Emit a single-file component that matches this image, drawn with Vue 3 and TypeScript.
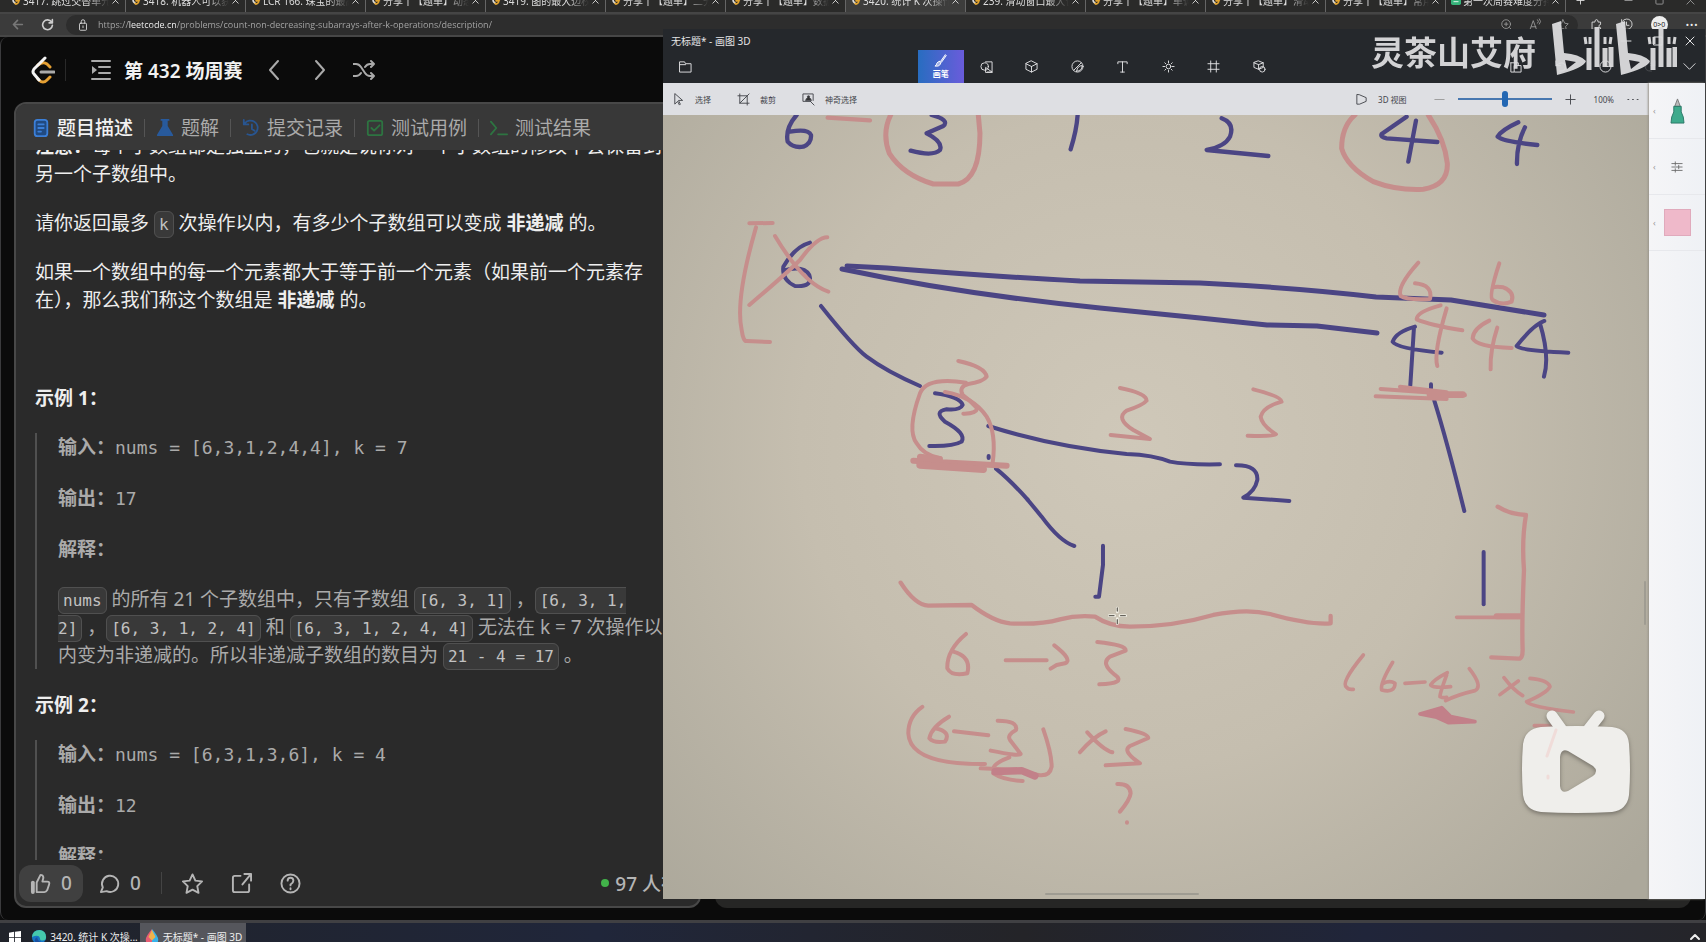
<script setup lang="ts">
import { ref } from 'vue'

interface BrowserTab {
  title: string
  active?: boolean
  sheet?: boolean
}

const browserTabs: BrowserTab[] = [
  { title: '3417. 跳过交替单元格' },
  { title: '3418. 机器人可以获得' },
  { title: 'LCR 166. 珠宝的最高' },
  { title: '分享丨【题单】动态规' },
  { title: '3419. 图的最大边权的' },
  { title: '分享丨【题单】二分算' },
  { title: '分享丨【题单】数据结' },
  { title: '3420. 统计 K 次操作以', active: true },
  { title: '239. 滑动窗口最大值' },
  { title: '分享丨【题单】单调栈' },
  { title: '分享丨【题单】滑动窗' },
  { title: '分享丨【题单】常用数' },
  { title: '第一次周赛难度分排', sheet: true },
]

const problemTabs = [
  { id: 'doc', label: '题目描述' },
  { id: 'flask', label: '题解' },
  { id: 'history', label: '提交记录' },
  { id: 'check', label: '测试用例' },
  { id: 'term', label: '测试结果' },
]
const activeTab = ref('doc')
const url = ref('https://leetcode.cn/problems/count-non-decreasing-subarrays-after-k-operations/description/')
const zoom = ref(50)
</script>

<template>
  <div class="desktop">
    <header class="browser">
      <div class="tabstrip">
        <div v-for="tab in browserTabs" :key="tab.title" class="btab" :class="{ on: tab.active }">
          <svg v-if="tab.sheet" class="fav" viewBox="0 0 12 12"><rect width="12" height="12" rx="2" fill="#36b37a" /><path d="M3 5h6M3 8h6" stroke="#fff" /></svg>
          <svg v-else class="fav" viewBox="0 0 12 12" fill="none" stroke-width="2" stroke-linecap="round"><path d="M7 1 3 5q-1 1 0 3l2 2" stroke="#ddd" /><path d="m5 10 1 1q1 0 3-2M6 7h4" stroke="#e4a52e" /></svg>
          <span class="btitle">{{ tab.title }}</span>
          <button class="bclose" aria-label="关闭标签页"><svg viewBox="0 0 10 10"><path d="m2 2 6 6M8 2 2 8" /></svg></button>
        </div>
        <button class="newtab" aria-label="新建标签页"><svg viewBox="0 0 10 10"><path d="M5 1v8M1 5h8" /></svg></button>
        <div class="wincontrols">
          <button aria-label="最小化"><svg viewBox="0 0 10 10"><path d="M1 5h8" /></svg></button>
          <button aria-label="最大化"><svg viewBox="0 0 10 10"><rect x="1" y="1" width="8" height="8" rx="1" /></svg></button>
          <button aria-label="关闭"><svg viewBox="0 0 10 10"><path d="m1 1 8 8M9 1 1 9" /></svg></button>
        </div>
      </div>
      <div class="addressrow">
        <button class="nav back" aria-label="后退"><svg viewBox="0 0 16 16"><path d="M14 8H3m5-5L3 8l5 5" /></svg></button>
        <button class="nav" aria-label="刷新"><svg viewBox="0 0 16 16"><path d="M13 5a6 6 0 1 0 1 4M14 2v4h-4" /></svg></button>
        <div class="addressbar">
          <svg viewBox="0 0 16 16"><rect x="4" y="6" width="8" height="8" rx="1" /><path d="M6 6V4q0-2 2-2t2 2v2M8 9v2" /></svg>
          <input v-model="url" type="text" aria-label="地址栏" />
          <svg viewBox="0 0 16 16" class="dim"><circle cx="7" cy="7" r="5" /><path d="m11 11 4 4M5 7h4M7 5v4" /></svg>
          <svg viewBox="0 0 16 16" class="dim"><path d="m2 14 4-11 4 11M4 10h5M11 2q2 2 0 4M13 1q3 3 0 6" /></svg>
          <svg viewBox="0 0 16 16" class="dim"><path d="m8 2 2 4 4 .6-3 3 .7 4.400L8 12l-3.700 2L5 9.600l-3-3L6 6z" /></svg>
        </div>
        <div class="browsertools">
          <button aria-label="扩展"><svg viewBox="0 0 16 16"><path d="M3 5h3q0-3 2-3t2 3h3v3q-2 0-2 2t2 2v2H3z" /></svg></button>
          <button aria-label="历史记录"><svg viewBox="0 0 16 16"><path d="M3 4a6.500 6.500 0 1 1-1 5M2 2v4h4M8 5v4h3" /></svg></button>
          <button class="avatar" aria-label="个人资料">0&gt;0</button>
          <button aria-label="更多">···</button>
        </div>
      </div>
    </header>

    <main class="page">
      <nav class="lcbar">
        <a href="#" class="logo" aria-label="力扣">
          <svg viewBox="0 0 24 28" fill="none" stroke-width="3" stroke-linecap="round" stroke-linejoin="round">
            <path d="M7 9q5-4 9-1l3 3M19 21l-3 3q-4 4-8 0l-1-1" stroke="#e5a033" /><path d="M14 2 3 13q-2 3 0 5l5 6" stroke="#f4f4f4" /><path d="M10 16h13" stroke="#aaa" />
          </svg>
        </a>
        <span class="rule"></span>
        <button class="list" aria-label="题目列表"><svg viewBox="0 0 22 22"><path d="M2 2h18M9 8h11M9 14h11M2 20h18" /><path d="M2 7v8l5-4z" fill="currentColor" stroke="none" /></svg></button>
        <a href="#" class="contest">第 432 场周赛</a>
        <button class="prev" aria-label="上一题"><svg viewBox="0 0 22 22"><path d="m15 2-8 9 8 9" /></svg></button>
        <button class="next" aria-label="下一题"><svg viewBox="0 0 22 22"><path d="m7 2 8 9-8 9" /></svg></button>
        <button aria-label="随机一题"><svg viewBox="0 0 22 22"><path d="M0 5h3q3 0 5 3l4 6q2 3 5 3h4M0 17h3q3 0 5-3M12 8q2-3 5-3h4M18 2l3 3-3 3M18 14l3 3-3 3" /></svg></button>
      </nav>

      <section class="panel">
        <div class="ptabs" role="tablist">
          <button v-for="t in problemTabs" :key="t.id" role="tab" class="ptab" :class="{ on: activeTab === t.id }" :aria-selected="activeTab === t.id" @click="activeTab = t.id">
            <svg v-if="t.id === 'doc'" class="raw" viewBox="0 0 20 20" stroke="#3b7fd8"><rect x="3" y="1" width="14" height="18" rx="3" fill="#214a80" /><path d="M7 6h6M7 10h6M7 14h3" /></svg>
            <svg v-else-if="t.id === 'flask'" class="raw" viewBox="0 0 20 20" fill="#285a9c" stroke="#285a9c"><path d="M6 1h8M8 2v6L2 18h16L12 8V2z" /></svg>
            <svg v-else-if="t.id === 'history'" class="raw" viewBox="0 0 20 20" fill="none" stroke="#285590"><path d="M3 5a8 8 0 1 1 3 12M2 1v5h5M11 6v5l3 2" /></svg>
            <svg v-else-if="t.id === 'check'" class="raw" viewBox="0 0 20 20" fill="none" stroke="#2d7441"><rect x="2" y="2" width="16" height="16" rx="2" /><path d="m6 10 3 3 6-6" /></svg>
            <svg v-else class="raw" viewBox="0 0 20 20" fill="none" stroke="#2d7441"><path d="m1 3 6 7-6 7M9 17h10" /></svg>
            <span>{{ t.label }}</span>
          </button>
        </div>

        <article class="content">
          <p class="first"><b>注意：</b>每个子数组都是独立的，也就是说你对一个子数组的修改不会保留到<br />另一个子数组中。</p>
          <p>请你返回最多 <code>k</code> 次操作以内，有多少个子数组可以变成 <b>非递减</b> 的。</p>
          <p>如果一个数组中的每一个元素都大于等于前一个元素（如果前一个元素存<br />在），那么我们称这个数组是 <b>非递减</b> 的。</p>
          <p>&nbsp;</p>
          <p><b>示例 1：</b></p>
          <blockquote>
            <p><b>输入：</b><samp>nums = [6,3,1,2,4,4], k = 7</samp></p>
            <p><b>输出：</b><samp>17</samp></p>
            <p><b>解释：</b></p>
            <p><code>nums</code> 的所有 21 个子数组中，只有子数组 <code>[6, 3, 1]</code> ，<code>[6, 3, 1, <br />2]</code> ，<code>[6, 3, 1, 2, 4]</code> 和 <code>[6, 3, 1, 2, 4, 4]</code> 无法在 k = 7 次操作以<br />内变为非递减的。所以非递减子数组的数目为 <code>21 - 4 = 17</code> 。</p>
          </blockquote>
          <p><b>示例 2：</b></p>
          <blockquote>
            <p><b>输入：</b><samp>nums = [6,3,1,3,6], k = 4</samp></p>
            <p><b>输出：</b><samp>12</samp></p>
            <p><b>解释：</b></p>
          </blockquote>
        </article>

        <footer class="pfoot">
          <button class="like"><svg viewBox="0 0 22 22"><path d="M7 20V10l4-8q3 0 3 3l-1 4h5q3 0 2 3l-2 6q-1 2-3 2z" /><path d="M3 10v10" stroke-width="4" /></svg>0</button>
          <button class="comment"><svg viewBox="0 0 22 22"><path d="M2 20l2-5a8.500 8.500 0 1 1 4 4z" /></svg>0</button>
          <span class="rule"></span>
          <button aria-label="收藏"><svg viewBox="0 0 22 22"><path d="m11 1.500 3 6.500 7 .8-5 5 1.300 7L11 17.400 4.700 20.800 6 13.800l-5-5L8 8z" /></svg></button>
          <button aria-label="分享"><svg viewBox="0 0 22 22"><path d="M10 3H4q-2 0-2 2v13q0 2 2 2h13q2 0 2-2v-6M14 1h7v7M21 1l-9 11" /></svg></button>
          <button aria-label="帮助"><svg viewBox="0 0 22 22"><circle cx="11" cy="11" r="9.500" /><path d="M8 8q0-3 3-3t3 3q0 2-3 4v1M11 16v1" /></svg></button>
          <span class="online"><i></i>97 人在线</span>
        </footer>
      </section>
      <div class="sidepanel"></div>
    </main>

    <footer class="taskbar">
      <button class="start" aria-label="开始"><svg class="raw" viewBox="0 0 14 14" fill="#fff"><path d="M0 2 6 1v6H0zM7 1l7-1v7H7zM0 8h6v6l-6-1zM7 8h7v7l-7-1z" /></svg></button>
      <button class="task">
        <svg class="raw" viewBox="0 0 18 18"><circle cx="9" cy="9" r="8" fill="#1674c4" /><path d="M1 9q1-8 9-8 7 1 7 8 0 4-4 4-3 0-3-3-1-4-9-1z" fill="#45c8ac" /><path d="M7 9q0 6 8 6-5 4-9 1-4-4 1-7z" fill="#1a4f9f" /></svg>
        3420. 统计 K 次操...
      </button>
      <button class="task on">
        <svg class="raw" viewBox="0 0 18 18"><path d="M9 0Q2 8 2 12q0 6 7 6z" fill="#e85d74" /><path d="M9 0q7 8 7 12 0 6-7 6z" fill="#37b2ea" /><path d="m9 1 4 8-4 4-4-4z" fill="#f0b24c" /></svg>
        无标题* - 画图 3D
      </button>
      <button class="tray" aria-label="显示隐藏的图标"><svg viewBox="0 0 12 12"><path d="m2 8 4-4 4 4" /></svg></button>
    </footer>

    <section class="paint">
      <div class="ptitle">
        <span>无标题* - 画图 3D</span>
        <div class="pcontrols">
          <button aria-label="最小化"><svg viewBox="0 0 12 12"><path d="M1 6h10" /></svg></button>
          <button aria-label="最大化"><svg viewBox="0 0 12 12"><path d="M2 2h8v8H2z" /></svg></button>
          <button aria-label="关闭"><svg viewBox="0 0 12 12"><path d="m2 2 8 8M10 2l-8 8" /></svg></button>
        </div>
      </div>
      <div class="ribbon">
        <button class="menu" aria-label="菜单"><svg viewBox="0 0 14 14"><path d="M1 2h5l1 2h6v9H1zM1 5h6" /></svg></button>
        <div class="modes">
          <button class="mode on"><svg viewBox="0 0 14 14"><path d="M12 1 7 8l1 1 5-7zM6 8q2 1 1 3-2 3-6 2 2-1 2-3 1-2 3-2z" fill="#fff" fill-opacity=".5" /></svg>画笔</button>
          <button class="mode" aria-label="2D 形状"><svg viewBox="0 0 14 14"><circle cx="5" cy="7" r="4" /><path d="M6 2h7v11H8M13 13 6 8v5z" /></svg></button>
          <button class="mode" aria-label="3D 形状"><svg viewBox="0 0 14 14"><path d="m7 1 6 3v6l-6 3-6-3V4zM1 4l6 3 6-3M7 7v6" /></svg></button>
          <button class="mode" aria-label="贴纸"><svg viewBox="0 0 14 14"><circle cx="7" cy="7" r="6" /><path d="M3 11 11 3M6 12q6 0 6-6Q7 6 6 12z" /></svg></button>
          <button class="mode" aria-label="文本"><svg viewBox="0 0 14 14"><path d="M2 4V2h10v2M7 2v11M5 13h4" /></svg></button>
          <button class="mode" aria-label="效果"><svg viewBox="0 0 14 14"><circle cx="7" cy="7" r="2.500" /><path d="M7 1v2M7 11v2M1 7h2M11 7h2M3 3l1 1M10 10l1 1M11 3l-1 1M4 10l-1 1" /></svg></button>
          <button class="mode" aria-label="画布"><svg viewBox="0 0 14 14"><path d="M4 1v12M10 1v12M1 4h12M1 10h12" /></svg></button>
          <button class="mode" aria-label="3D 资源库"><svg viewBox="0 0 14 14"><path d="m6 1 5 2v5L6 10 1 8V3zM1 3l5 2 5-2M6 5v5" /><circle cx="10" cy="10" r="3" /></svg></button>
        </div>
        <div class="edits">
          <button aria-label="粘贴"><svg viewBox="0 0 14 14"><path d="M2 3h8v3M2 3v10h3M6 6h7v7H6z" /></svg></button>
          <button aria-label="撤消"><svg viewBox="0 0 14 14"><path d="M2 1v5h5M2 6q8-6 10 0t-6 6" /></svg></button>
          <button aria-label="历史记录"><svg viewBox="0 0 14 14"><circle cx="7" cy="7" r="6" /><path d="M7 3v4h3" /></svg></button>
          <button aria-label="重做" class="faint"><svg viewBox="0 0 14 14"><path d="M12 1v5H7M12 6Q4 0 2 6t6 6" /></svg></button>
        </div>
        <button class="collapse" aria-label="折叠"><svg viewBox="0 0 14 14"><path d="m1 4 6 6 6-6" /></svg></button>
      </div>
      <div class="workspace">
        <div class="drawarea">
          <div class="ptools">
            <button><svg viewBox="0 0 14 14"><path d="M3 1v11l3-3 2 4 1-1-2-4h4z" /></svg>选择</button>
            <button><svg viewBox="0 0 14 14"><path d="M3 1v10h10M1 3h10v10M13 1 3 11" /></svg>裁剪</button>
            <button><svg viewBox="0 0 14 14"><path d="M9 9H1V1h11v7M9 9l4 4" /><path d="M4 8q0-2 2-3-1-2 1-2t1 2q2 1 2 3z" fill="#333" /></svg>神奇选择</button>
            <div class="zoomtools">
              <button><svg viewBox="0 0 14 14"><path d="M2 2v10h3l7-3V5L5 2z" /></svg>3D 视图</button>
              <button class="minus" aria-label="缩小"><svg viewBox="0 0 14 14"><path d="M2 7h10" /></svg></button>
              <input v-model="zoom" type="range" min="0" max="100" aria-label="缩放" />
              <button class="plus" aria-label="放大"><svg viewBox="0 0 14 14"><path d="M2 7h10M7 2v10" /></svg></button>
              <span class="percent">100%</span>
              <button aria-label="更多选项"><svg viewBox="0 0 14 14"><path d="M2 7h1M7 7h1M12 7h1" /></svg></button>
            </div>
          </div>
          <svg class="canvas" viewBox="663 115 986 784" preserveAspectRatio="xMidYMin slice" role="img" aria-label="手写推导">
            <defs>
              <radialGradient id="paper" gradientUnits="userSpaceOnUse" cx="1130" cy="440" r="660">
                <stop offset="0" stop-color="#cfc8b9" /><stop offset=".5" stop-color="#c5beaf" /><stop offset="1" stop-color="#aca89b" />
              </radialGradient>
            </defs>
            <rect x="663" y="115" width="986" height="784" fill="url(#paper)" />
            <g fill="none" stroke-linecap="round" stroke-linejoin="round">
              <g class="blue" stroke-width="5">
                <path d="M847 266 887 268Q1000 277 1080 281L1200 283Q1300 288 1376 297L1451 300 1544 315" />
                <path d="M842 269Q960 294 1100 308L1200 318 1267 325 1317 326 1377 333" />
              </g>
              <g transform="translate(660 100) scale(.3333)">
                <g class="blue" stroke-width="13">
                  <path d="M410 45Q375 85 383 125 400 145 430 140 455 130 453 105 445 85 390 95M815 45Q870 60 850 78L800 100Q850 125 840 150 820 170 752 152M1253 45Q1250 90 1232 148" />
                </g>
                <g class="pink"><path stroke-width="13" d="M503 53 630 61" /><path stroke-width="15" d="M692 45Q665 100 688 160 730 225 820 252H895Q960 235 960 100L955 45" /></g>
              </g>
              <g transform="translate(1200) scale(.3333)">
                <path class="pink" stroke-width="15" d="M465 345Q425 380 425 445 440 500 520 545 590 572 670 568 745 555 742 490 735 420 685 345" />
                <path class="blue" stroke-width="13" d="M65 355Q105 370 90 410 75 440 20 450L205 468M620 350 545 402Q540 412 560 415L712 426M648 362 625 485M955 367Q905 390 893 410 910 425 1012 435M975 382Q950 430 951 492" />
              </g>
              <g transform="translate(720 200) scale(.3333)">
                <g class="blue" stroke-width="12">
                  <path d="M270 128Q225 140 190 200 185 240 225 258 280 262 268 225 250 195 190 212M303 318Q400 440 440 470 500 515 600 558" />
                  <path d="M645 580Q720 590 728 615 720 632 680 628 640 635 675 665 740 700 725 725 700 740 628 738" />
                  <path d="M805 678Q1000 740 1220 762 1300 765 1350 785 1400 795 1500 793M806 768v6M828 806Q870 840 923 899" />
                </g>
                <g class="pink" stroke-width="12">
                  <path d="M88 70 158 69M108 82Q45 300 65 390 70 425 80 423L150 426" />
                  <path d="M165 108Q250 250 325 275M322 112Q290 112 240 180 200 220 88 315" />
                  <path d="M738 548Q620 530 600 580 560 690 590 730 610 765 660 775M675 576Q760 590 800 650 830 700 818 790" />
                  <path d="M715 483Q795 500 800 530 790 545 745 552 715 560 728 585 750 600 772 625 768 642 730 641" />
                  <path d="M1200 564Q1280 580 1280 602 1270 615 1220 632 1185 655 1240 690L1290 717 1172 705" />
                  <path d="M580 782 860 797M600 770 660 777" stroke-width="18" /><path d="M600 795 790 808" stroke-width="22" />
                </g>
              </g>
              <g transform="translate(1200 230) scale(.3333)">
                <g class="blue" stroke-width="12">
                  <path d="M645 290Q590 305 578 335 590 355 725 368M642 292 631 466M1033 273Q1000 285 950 348 960 362 1105 368M1020 280Q1050 380 1032 440M693 463v12M703 512Q740 630 793 843" />
                  <path d="M108 706Q175 705 172 750 165 785 130 803L268 813" />
                </g>
                <g class="pink" stroke-width="12">
                  <path d="M655 98Q590 170 602 198 620 210 690 207 700 165 645 160M898 100Q865 200 878 210 905 228 935 215 945 185 910 172 890 168 880 172" />
                  <path d="M722 226Q650 245 650 268 690 285 787 301M740 235Q700 370 712 408M868 272Q820 295 818 325 830 350 935 354M892 293Q870 360 872 418" />
                  <path d="M542 477 795 495M527 499 740 507M600 470 740 487" /><path d="M690 494H788" stroke-width="20" />
                  <path d="M160 478Q245 500 245 515 190 530 182 560 185 585 228 613 225 620 143 617" />
                </g>
              </g>
              <g transform="translate(860 500) scale(.3333)">
                <path class="blue" stroke-width="12" d="M503 -1 545 50Q600 125 643 138M729 137V195L717 290H706" />
                <g class="pink" stroke-width="12">
                  <path stroke-width="13" d="M122 248Q165 315 205 317L335 315Q400 365 450 370 540 375 600 358 650 345 705 350 750 380 810 380 940 380 1060 345 1160 325 1230 342 1350 375 1412 370V348" />
                  <path d="M318 402Q260 450 262 505 275 530 322 520 335 470 280 455M437 481H560M583 436Q640 480 615 490L590 495 572 506M712 426Q800 435 797 452L750 470Q720 490 765 525 800 550 718 553" />
                  <path d="M187 621Q145 650 145 700 150 795 375 792M267 650Q215 680 208 715 220 730 255 725 275 695 225 685M282 694 385 706M413 662Q475 662 468 690 440 705 450 720L482 762Q480 770 392 752" />
                  <path d="M448 772Q400 790 400 808M362 805 480 810M550 688Q575 760 575 800 570 828 540 826L480 815M400 820Q430 840 488 843" />
                  <path d="M405 815 485 812 525 828" stroke-width="22" class="deep" />
                  <path d="M682 697Q730 750 757 757M737 694Q700 710 660 757M797 687Q865 700 865 714L810 738Q790 750 820 775L840 790 737 796M772 852Q810 850 812 880 810 900 780 935M801 967v1" />
                </g>
                <path d="M748 347h16M780 347h17M772 324v12M772 356v15" stroke="#f4f2e8" stroke-width="8" /><path d="M748 347h14M782 347h14M772 324v9M772 359v12" stroke="#67645c" stroke-width="4" />
              </g>
              <g transform="translate(1300 490) scale(.3333)">
                <path class="blue" stroke-width="12" d="M551 186V343" />
                <g class="pink" stroke-width="11">
                  <path d="M593 50Q630 73 678 75 665 150 672 240 665 400 668 480 668 508 655 506L574 502" stroke-width="13" />
                  <path d="M470 382H660M190 495Q120 580 140 592 145 600 160 598M278 517Q240 580 245 600 285 610 285 580 270 570 250 580M315 580 375 576M442 548Q400 570 392 585 400 595 452 590M440 555Q420 610 420 620 430 625 440 622" />
                  <path d="M590 379H660" stroke-width="18" />
                  <path d="M508 536Q550 590 525 602 470 615 437 632M612 563Q640 600 668 617M655 573 600 614M690 565Q745 570 750 590 740 610 680 635 690 650 820 666M703 707H768L742 795M748 858v2" />
                  <path class="deep" fill="#c28089" d="M360 672 425 653 452 680 525 695 445 698 410 682z" />
                </g>
              </g>
              <path d="M1645 582v42M1046 894h152" stroke="#9f9c92" stroke-width="2" />
            </g>
          </svg>
        </div>
        <aside class="brushes">
          <button aria-label="马克笔"><svg class="marker raw" viewBox="0 0 16 28"><path d="m5 9 3-8 3 8z" fill="#bbb" stroke="#777" /><path d="M4 9h8v6q3 5 3 12H1q0-7 3-12z" fill="#3eaa8c" stroke="#277565" /></svg></button>
          <button aria-label="粗细和不透明度"><svg class="tune" viewBox="0 0 14 14"><path d="M1 3h12M1 7h12M1 11h12M5 1v4M9 5v4M5 9v4" /></svg></button>
          <button aria-label="当前颜色"><span class="swatch"></span></button>
        </aside>
      </div>
    </section>

    <div class="watermark">
      <span>灵茶山艾府</span>
      <svg viewBox="0 0 126 56" role="img" aria-label="bilibili" fill="none" stroke="#dcdcde" stroke-linejoin="round">
        <g id="half">
          <path d="M1 4 10 1 13 33Q28 34 35 41 33 48 6 55z" fill="#dcdcde" stroke="none" /><path d="m14 40 11 2-9 7z" fill="#25262b" stroke="none" />
          <path d="M38 28v22M46 7v40M54 28v19M60 27v20" stroke-width="5" /><path d="m34 17 1 7M39 17v7M54 17v7M60 17l-1 7" stroke-width="3" />
        </g>
        <use href="#half" x="64" />
      </svg>
    </div>
    <svg class="tv" viewBox="0 0 110 106" aria-hidden="true">
      <path d="m31 6 10 14M78 6 67 20" stroke="#efeeeb" stroke-width="11" stroke-linecap="round" />
      <path fill="#efeeeb" fill-rule="evenodd" d="M20 17Q55 15 91 17 107 19 108 34 110 60 108 85 106 100 91 102 55 104 20 102 4 100 2 85 0 60 2 34 4 19 20 17zM39 47v29q1 8 8 5l25-15q6-5 0-10L47 41q-7-3-8 6z" />
      <path d="m35 20-9 26M27 66v2" stroke="#f0dcd9" stroke-width="3" stroke-linecap="round" fill="none" />
    </svg>
  </div>
</template>

<style>
html, body { margin: 0; height: 100%; background: #0c0c0c; }
#app { height: 100%; }
</style>

<style scoped>
* { box-sizing: border-box; }
.desktop { position: relative; display: flex; flex-direction: column; height: 100vh; overflow: hidden; color: #eee; font-family: "Noto Sans", "Noto Sans CJK SC", sans-serif; }
button, input { margin: 0; padding: 0; border: 0; background: none; color: inherit; font: inherit; }
button { display: flex; align-items: center; justify-content: center; flex: none; }
a { color: inherit; text-decoration: none; }
svg { display: block; flex: none; }
button svg:not(.raw), .addressbar svg { fill: none; stroke: currentColor; stroke-linecap: round; stroke-linejoin: round; }

.browser { flex: none; }
.tabstrip { display: flex; align-items: flex-end; height: 14px; padding-left: 6px; overflow: hidden; background: #2a2a29; border-bottom: 2px solid #454545; font-size: 10px; color: #ddd; }
.btab { display: flex; align-items: center; flex: 0 1 120px; min-width: 0; height: 24px; padding: 0 5px; gap: 2px; border-right: 1px solid #666; }
.btab.on { background: #3d3d3c; border-radius: 6px 6px 0 0; }
.fav { width: 10px; height: 10px; }
.btitle { flex: 1; min-width: 0; overflow: hidden; white-space: nowrap; mask-image: linear-gradient(90deg, #000 75%, transparent); }
.bclose svg, .newtab svg, .wincontrols svg { width: 9px; height: 9px; }
.newtab { width: 28px; height: 24px; }
.wincontrols { display: flex; margin-left: auto; height: 24px; color: #999; }
.wincontrols button { width: 31px; }
.addressrow { display: flex; height: 23px; align-items: center; background: #3b3b3b; border-bottom: 2px solid #474747; }
.nav { width: 30px; color: #ccc; }
.nav.back { margin-left: 2px; color: #777; }
.nav svg { width: 13px; height: 13px; stroke-width: 2; }
.addressbar { display: flex; flex: 1; align-items: center; height: 20px; margin-left: 4px; padding: 0 8px 0 10px; gap: 14px; border-radius: 10px; background: #2d2d2d; color: #ddd; }
.addressbar svg { width: 14px; height: 14px; }
.addressbar .dim { color: #999; }
.addressbar input { flex: 1; min-width: 0; margin-left: -6px; font-family: "Open Sans", sans-serif; font-size: 9px; color: transparent; background: linear-gradient(90deg, #aaa 30px, #fff 30px, #fff 78px, #aaa 78px); -webkit-background-clip: text; background-clip: text; }
.browsertools { display: flex; width: 128px; align-items: center; justify-content: space-between; padding: 0 8px 0 12px; }
.browsertools svg { width: 13px; height: 13px; }
.avatar { width: 17px; height: 17px; border-radius: 50%; background: #eee; color: #222; font-size: 7px; }

.page { flex: 1; min-height: 0; display: grid; grid-template: 65px minmax(0, 1fr) / 686px minmax(0, 1fr); column-gap: 14px; padding: 0 14px 12px; background: #0b0b0b; border: solid #3b3b3d; border-width: 0 1px 0 1px; border-radius: 8px 0 8px 8px; }
.lcbar { grid-column: 1 / 3; display: flex; align-items: center; padding-left: 16px; color: #aaa; }
.lcbar svg { width: 22px; height: 22px; stroke-width: 2; }
.lcbar .logo svg { width: 24px; height: 28px; stroke-width: 3; }
.rule { width: 1px; height: 22px; background: #444; }
.lcbar .rule { margin: 0 24px 0 10px; background: #292929; }
.contest { margin: 0 21px 0 12px; font-size: 19px; font-weight: 600; color: #f2f2f2; }
.next { margin: 0 22px 0 24px; }

.panel { display: flex; flex-direction: column; min-height: 0; margin-left: -1px; border: 2px solid #484848; border-radius: 12px; background: #2a2a2a; overflow: hidden; }
.ptabs { flex: none; display: flex; align-items: center; height: 46px; padding: 2px 0 0 16px; background: #383838; font-size: 19px; color: #aaa; }
.ptab { gap: 7px; padding: 0 11px; border-right: 1px solid #555; line-height: 18px; }
.ptab:first-child { padding-left: 0; }
.ptab:last-child { border: 0; }
.ptab.on { color: #f2f2f2; font-weight: 500; }
.ptab svg { width: 18px; height: 18px; stroke-width: 2; stroke-linecap: round; stroke-linejoin: round; }
.content { flex: 1; min-height: 0; overflow: hidden; padding-left: 19px; white-space: nowrap; font-size: 19px; line-height: 28px; }
.content p { margin: 0 0 21px; }
.content .first { margin-top: -18px; }
.content blockquote { margin: 0 0 22px; padding-left: 21px; border-left: 2px solid #505050; color: #aaa; }
.content blockquote p { margin-bottom: 22px; }
.content blockquote p:last-child { margin-bottom: 0; }
code { padding: 3px 4px; border: 1px solid #505050; border-radius: 6px; background: #393939; font: 16px/20px "DejaVu Sans Mono", monospace; color: #c2c2c2; }
samp { font-family: "DejaVu Sans Mono", monospace; font-size: 18px; }
.pfoot { flex: none; display: flex; align-items: center; height: 46px; padding-left: 3px; color: #b5b5b5; font-size: 19px; font-weight: 500; }
.pfoot svg { width: 21px; height: 21px; stroke-width: 2; }
.pfoot button { margin-right: 28px; }
.pfoot .like { width: 64px; height: 37px; gap: 10px; margin-right: 16px; border-radius: 12px; background: #404040; }
.pfoot .comment { gap: 10px; margin-right: 20px; }
.pfoot .rule { height: 22px; margin-right: 20px; }
.online { display: flex; align-items: center; gap: 6px; margin-left: auto; }
.online i { width: 8px; height: 8px; border-radius: 50%; background: #42b34a; }
.sidepanel { border-radius: 12px; background: #262625; }

.taskbar { flex: none; display: flex; align-items: flex-start; height: 22px; overflow: hidden; border-top: 3px solid #404043; background: linear-gradient(90deg, #20232a, #20263a 35%, #242428 60%, #20253a 80%, #252529); font-size: 10px; }
.taskbar button { height: 27px; }
.start { width: 29px; }
.start svg { width: 12px; height: 12px; }
.task { width: 106px; gap: 3px; white-space: nowrap; }
.task:nth-child(2) { width: 111px; }
.task.on { background: #55565c; }
.task svg { width: 16px; height: 16px; }
.taskbar .tray { margin-left: auto; width: 22px; }
.tray svg { width: 12px; height: 12px; stroke-width: 2; }

.paint { position: absolute; top: 29px; right: 1px; bottom: 43px; left: 663px; display: flex; flex-direction: column; background: #25282c; color: #e4e4e6; }
.ptitle { flex: none; display: flex; align-items: center; height: 21px; padding: 2px 9px 0 8px; font-size: 10px; }
.pcontrols { display: flex; gap: 20px; margin-left: auto; }
.pcontrols svg { width: 12px; height: 12px; }
.ribbon { flex: none; display: grid; grid-template-columns: 1fr 364px 1fr; height: 33px; align-items: center; position: relative; }
.menu { justify-self: start; margin-left: 16px; }
.ribbon svg { width: 13px; height: 13px; }
.modes { grid-column: 2; display: grid; grid-template-columns: repeat(8, 1fr); height: 33px; margin-left: -84px; margin-right: 84px; }
.mode.on { flex-direction: column; gap: 1px; background: linear-gradient(90deg, #286dc0, #6a5cdb); color: #fff; font-size: 8px; font-weight: 600; line-height: 11px; }
.edits { display: flex; justify-content: flex-end; gap: 32px; padding-right: 94px; }
.edits .faint { opacity: .2; margin-right: -46px; }
.collapse { position: absolute; right: 9px; top: 10px; }
.workspace { flex: 1; min-height: 0; display: flex; }
.drawarea { flex: 1; min-width: 0; display: flex; flex-direction: column; }
.ptools { flex: none; display: flex; align-items: center; height: 32px; padding: 0 10px 0 9px; gap: 26px; background: #dedfe3; color: #44464c; font-size: 8px; white-space: nowrap; }
.ptools button { gap: 10px; }
.ptools svg { width: 13px; height: 13px; }
.zoomtools { display: flex; align-items: center; gap: 12px; margin-left: auto; }
.zoomtools .minus { margin-left: 14px; color: #999; }
input[type="range"] { width: 94px; height: 18px; appearance: none; background: linear-gradient(#4777b0, #4777b0) center / 100% 2px no-repeat; }
input[type="range"]::-webkit-slider-thumb { appearance: none; width: 6px; height: 16px; border-radius: 3px; background: #2367b3; }
.percent { margin-left: 5px; }
.canvas { flex: 1; min-height: 0; width: 100%; }
.blue { stroke: #4b4584; }
.pink { stroke: #c68e8c; }
.deep { stroke: #c28089; }
.brushes { flex: none; display: flex; flex-direction: column; width: 56px; background: linear-gradient(90deg, #f5f5f7, #eff1f5); box-shadow: -1px 0 2px #99958c; color: #666; }
.brushes button { position: relative; height: 56px; border-bottom: 1px solid #e7e8ec; }
.brushes button::before { content: "‹"; position: absolute; left: 4px; color: #999; font-size: 9px; }
.marker { width: 15px; height: 26px; }
.tune { width: 12px; height: 12px; }
.swatch { width: 27px; height: 27px; border: 1px solid #e0aabc; background: #efb9ca; }

.watermark { position: absolute; top: 20px; right: 29px; display: flex; align-items: flex-start; gap: 15px; color: #dcdcde; font: 700 33px/62px "Noto Sans CJK SC", sans-serif; opacity: .95; pointer-events: none; }
.watermark svg { width: 126px; height: 56px; }
.tv { position: absolute; right: 75px; bottom: 126px; width: 110px; height: 106px; filter: drop-shadow(0 2px 2px #77736a); }
</style>
